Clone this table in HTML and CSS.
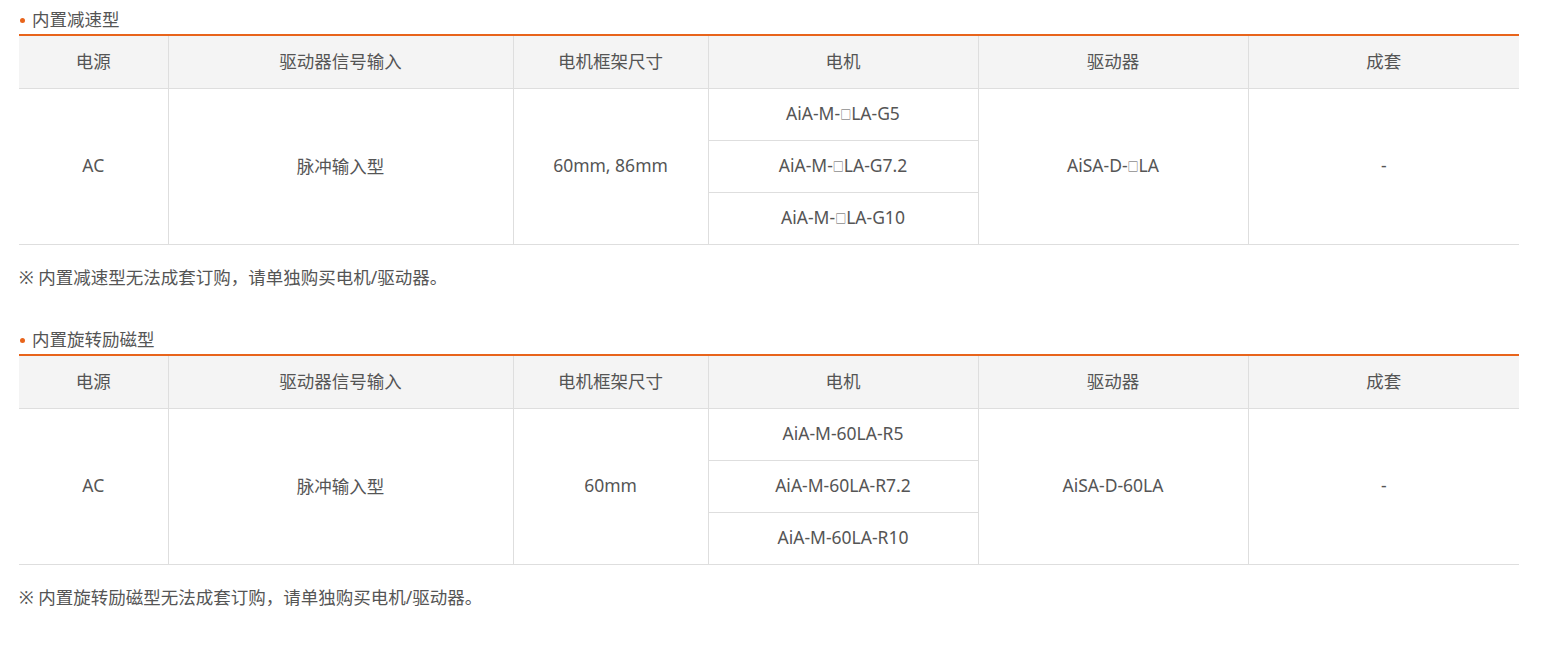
FILE: index.html
```html
<!DOCTYPE html>
<html lang="zh-CN">
<head>
<meta charset="utf-8">
<title>规格</title>
<link rel="stylesheet" href="styles.css">
</head>
<body>
<div class="page">
  <section class="section">
    <h3 class="title"><span class="dot"></span>内置减速型</h3>
    <table class="spec">
      <colgroup>
        <col class="c1"><col class="c2"><col class="c3"><col class="c4"><col class="c5"><col class="c6">
      </colgroup>
      <thead>
        <tr><th>电源</th><th>驱动器信号输入</th><th>电机框架尺寸</th><th>电机</th><th>驱动器</th><th>成套</th></tr>
      </thead>
      <tbody>
        <tr>
          <td rowspan="3">AC</td>
          <td rowspan="3">脉冲输入型</td>
          <td rowspan="3">60mm, 86mm</td>
          <td>AiA-M-<span class="sq">□</span>LA-G5</td>
          <td rowspan="3">AiSA-D-<span class="sq">□</span>LA</td>
          <td rowspan="3">-</td>
        </tr>
        <tr><td>AiA-M-<span class="sq">□</span>LA-G7.2</td></tr>
        <tr><td>AiA-M-<span class="sq">□</span>LA-G10</td></tr>
      </tbody>
    </table>
    <p class="note">※ 内置减速型无法成套订购，请单独购买电机/驱动器。</p>
  </section>
  <section class="section">
    <h3 class="title"><span class="dot"></span>内置旋转励磁型</h3>
    <table class="spec">
      <colgroup>
        <col class="c1"><col class="c2"><col class="c3"><col class="c4"><col class="c5"><col class="c6">
      </colgroup>
      <thead>
        <tr><th>电源</th><th>驱动器信号输入</th><th>电机框架尺寸</th><th>电机</th><th>驱动器</th><th>成套</th></tr>
      </thead>
      <tbody>
        <tr>
          <td rowspan="3">AC</td>
          <td rowspan="3">脉冲输入型</td>
          <td rowspan="3">60mm</td>
          <td>AiA-M-60LA-R5</td>
          <td rowspan="3">AiSA-D-60LA</td>
          <td rowspan="3">-</td>
        </tr>
        <tr><td>AiA-M-60LA-R7.2</td></tr>
        <tr><td>AiA-M-60LA-R10</td></tr>
      </tbody>
    </table>
    <p class="note">※ 内置旋转励磁型无法成套订购，请单独购买电机/驱动器。</p>
  </section>
</div>
</body>
</html>
```
FILE: styles.css
```css
html, body {
  margin: 0;
  padding: 0;
  background: #fff;
}
body {
  font-family: "Noto Sans", "Noto Sans CJK SC", sans-serif;
  color: #555;
}
.page {
  width: 1500px;
  padding: 7px 0 0 19px;
}
.section {
  margin-bottom: 38px;
}
.title {
  display: flex;
  align-items: center;
  margin: 0;
  height: 24px;
  padding-bottom: 3px;
  border-bottom: 2px solid #e8641b;
  font-size: 17.5px;
  font-weight: normal;
  line-height: 24px;
  color: #555;
}
.dot {
  width: 5px;
  height: 5px;
  border-radius: 50%;
  background: #e8641b;
  margin: 2px 7px 0 1px;
}
.spec {
  width: 1500px;
  border-collapse: collapse;
  table-layout: fixed;
  font-size: 17.5px;
}
.c1 { width: 149px; }
.c2 { width: 345px; }
.c3 { width: 195px; }
.c4 { width: 270px; }
.c5 { width: 270px; }
.c6 { width: 271px; }
.spec th, .spec td {
  height: 48px;
  padding: 0 0 3px;
  text-align: center;
  vertical-align: middle;
  border: 1px solid #dedede;
  font-weight: normal;
  color: #555;
}
.spec th {
  height: 49px;
  background: #f4f4f4;
  border-top: none;
}
.spec tr > :first-child { border-left: none; }
.spec tr > :last-child { border-right: none; }
.spec tbody tr:nth-child(n+2) > td:last-child { border-right: 1px solid #dedede; }
.sq {
  font-size: 11px;
  vertical-align: 1px;
}
.note {
  margin: 20px 0 0;
  font-size: 17.5px;
  line-height: 24px;
}
```
